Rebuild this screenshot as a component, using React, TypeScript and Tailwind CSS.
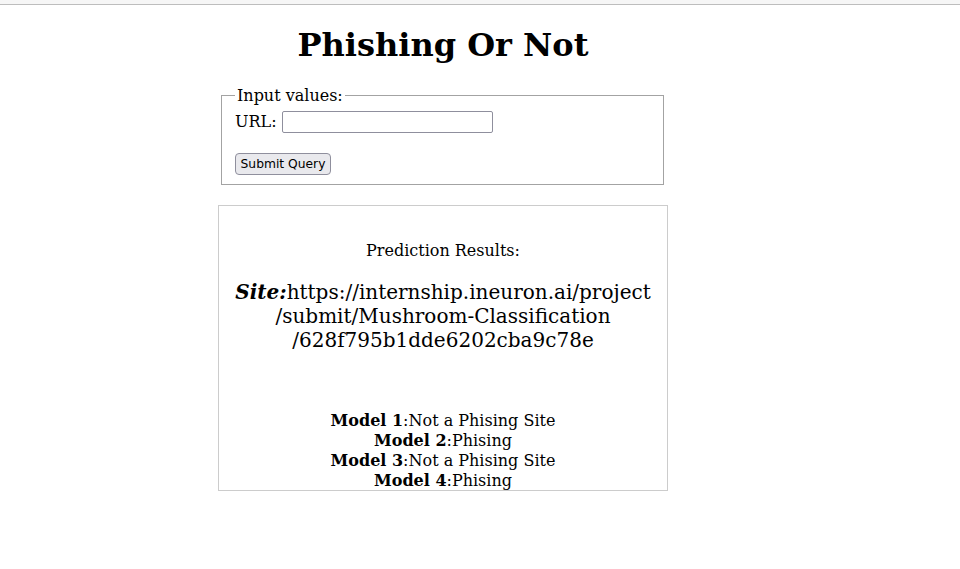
export default function App() {
  const models = [
    { name: "Model 1", result: "Not a Phising Site" },
    { name: "Model 2", result: "Phising" },
    { name: "Model 3", result: "Not a Phising Site" },
    { name: "Model 4", result: "Phising" },
  ];

  return (
    <main className="min-h-screen bg-white text-black font-['DejaVu_Serif',serif] text-[16px]">
      <div className="box-border h-[5px] bg-[#f6f6f6] border-b border-[#bdbdbd]" />
      <div className="ml-[218px] w-[450px]">
        <h1 className="mt-[22px] text-center text-[32px] font-bold leading-[37px]">Phishing Or Not</h1>

        <form onSubmit={(e) => e.preventDefault()}>
          <fieldset className="mt-[22px] ml-[3px] mr-[4px] border border-[#a3a3a3] px-[13px] pt-[5.6px] pb-[9px]">
            <legend className="px-[2px] leading-[19px]">Input values:</legend>
            <div className="flex items-center h-[22px]">
              <label htmlFor="url" className="leading-[19px]">URL:</label>
              <input
                id="url"
                type="text"
                className="ml-[5px] box-border w-[211px] h-[22px] border border-[#8f8f9d] rounded-[2px] px-[2px] text-[13px] font-['DejaVu_Sans',sans-serif] outline-none"
              />
            </div>
            <div className="h-[18px]" />
            <button
              type="submit"
              className="box-border h-[22px] w-[96px] border border-[#8f8f9d] rounded-[4px] bg-[#e9e9ed] text-[12.3px] leading-[16px] text-black font-['DejaVu_Sans',sans-serif]"
            >
              Submit Query
            </button>
          </fieldset>
        </form>

        <div className="mt-[20px] box-border h-[286px] border border-[#cccccc] pt-[35px] text-center">
          <p className="leading-[19px]">Prediction Results:</p>
          <p className="mt-[20px] text-[20px] leading-[24px] whitespace-nowrap">
            <b className="italic">Site:</b>https://internship.ineuron.ai/project
            <br />
            /submit/Mushroom-Classification
            <br />
            /628f795b1dde6202cba9c78e
          </p>
          <div className="mt-[59px] leading-[20px]">
            {models.map((m) => (
              <div key={m.name}>
                <b>{m.name}</b>:{m.result}
              </div>
            ))}
          </div>
        </div>
      </div>
    </main>
  );
}
